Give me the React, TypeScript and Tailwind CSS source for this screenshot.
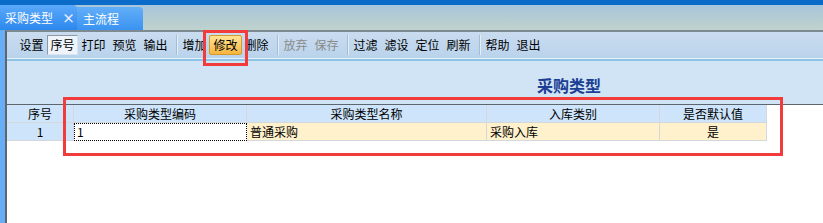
import React from 'react';

type Tool = { label: string; kind?: 'pressed' | 'active' | 'disabled' } | 'sep';

const tools: Tool[] = [
    { label: '设置' },
    { label: '序号', kind: 'pressed' },
    { label: '打印' },
    { label: '预览' },
    { label: '输出' },
    'sep',
    { label: '增加' },
    { label: '修改', kind: 'active' },
    { label: '删除' },
    'sep',
    { label: '放弃', kind: 'disabled' },
    { label: '保存', kind: 'disabled' },
    'sep',
    { label: '过滤' },
    { label: '滤设' },
    { label: '定位' },
    { label: '刷新' },
    'sep',
    { label: '帮助' },
    { label: '退出' },
];

const cols = [
    { title: '序号', w: 'w-[67px]' },
    { title: '采购类型编码', w: 'w-[173px]' },
    { title: '采购类型名称', w: 'w-[240px]' },
    { title: '入库类别', w: 'w-[173px]' },
    { title: '是否默认值', w: 'w-[107px]' },
];

const ToolButton: React.FC<{ tool: Exclude<Tool, 'sep'> }> = ({ tool }) => {
    let cls = 'w-[31px] h-[20px] flex items-center justify-center leading-none';
    if (tool.kind === 'pressed') cls += ' bg-[#eef4fa] border border-t-[#8d99a6] border-l-[#8d99a6] border-r-[#d8e4ef] border-b-[#d8e4ef]';
    if (tool.kind === 'active') cls += ' w-[33px] -mx-px bg-linear-to-b from-[#ffe394] to-[#f7b53a] border border-[#d59a2c] rounded-[2px]';
    if (tool.kind === 'disabled') cls += ' text-[#8a8a8a]';
    return <div className={cls}>{tool.label}</div>;
};

export default function App() {
    return (
        <div className="relative w-[823px] h-[223px] overflow-hidden bg-white text-[12px] text-black font-['Noto_Sans_CJK_SC','Noto_Sans',sans-serif]">
            <div className="h-[5px] bg-[#0a6bc9]" />
            <div className="h-[25px] flex items-end bg-linear-to-b from-[#a8c5d9] to-[#bfd2cd]">
                <div className="h-[25px] w-[77px] flex items-center pl-[5px] text-white rounded-tr-[4px] bg-linear-to-b from-[#5aa9fa] to-[#2b88ee]">
                    <span>采购类型</span>
                    <span className="ml-[9px] font-bold text-[13px] text-[#e8ecff]">×</span>
                </div>
                <div className="h-[23px] w-[66px] flex items-center pl-[6px] text-white rounded-tr-[4px] bg-linear-to-b from-[#62aef8] to-[#3a93f1]">
                    主流程
                </div>
            </div>
            <div className="flex h-[193px]">
                <div className="w-[5px] bg-[#68aef6]" />
                <div className="flex-1 flex flex-col border-l-2 border-t-2 border-l-[#5d666e] border-t-[#7d8a92]">
                    <div className="h-[26px] flex items-center pl-[9px] bg-linear-to-b from-[#cadcef] to-[#b9d3ec]">
                        {tools.map((t, i) =>
                            t === 'sep' ? (
                                <div key={i} className="ml-[5px] mr-[2px] w-px h-[20px] bg-[#a3bdd6] shadow-[1px_0_0_#e4eef8]" />
                            ) : (
                                <ToolButton key={i} tool={t} />
                            )
                        )}
                    </div>
                    <div className="h-px bg-[#e6f1fa]" />
                    <div className="h-[2px] bg-[#8ec5e6]" />
                    <div className="h-[43px] bg-[#d0e4f5] pl-[530px] pt-[13px]">
                        <span className="text-[16px] leading-[22px] font-bold text-[#1c3f94]">采购类型</span>
                    </div>
                    <div className="h-px bg-[#5d666e]" />
                    <div className="flex h-[18px]">
                        {cols.map((c) => (
                            <div key={c.title} className={`${c.w} flex items-center justify-center bg-[#cde4fa] border-r border-b border-[#d4d8dc]`}>
                                {c.title}
                            </div>
                        ))}
                    </div>
                    <div className="flex h-[18px]">
                        <div className="w-[67px] flex items-center justify-center bg-[#cde4fa] border-r border-b border-[#d4d8dc]">1</div>
                        <div className="w-[173px] flex items-center pl-[2px] bg-white border border-dotted border-black">1</div>
                        <div className="w-[240px] flex items-center pl-[3px] bg-[#fff1cb] border-r border-b border-[#d4d8dc]">普通采购</div>
                        <div className="w-[173px] flex items-center pl-[3px] bg-[#fff1cb] border-r border-b border-[#d4d8dc]">采购入库</div>
                        <div className="w-[107px] flex items-center justify-center bg-[#fff1cb] border-r border-b border-[#d4d8dc]">是</div>
                    </div>
                </div>
            </div>
            <div className="absolute left-[203px] top-[30px] w-[45px] h-[36px] border-[3px] border-[#f23c3c]" />
            <div className="absolute left-[63px] top-[97px] w-[720px] h-[59px] border-[3px] border-[#f23c3c]" />
        </div>
    );
}
